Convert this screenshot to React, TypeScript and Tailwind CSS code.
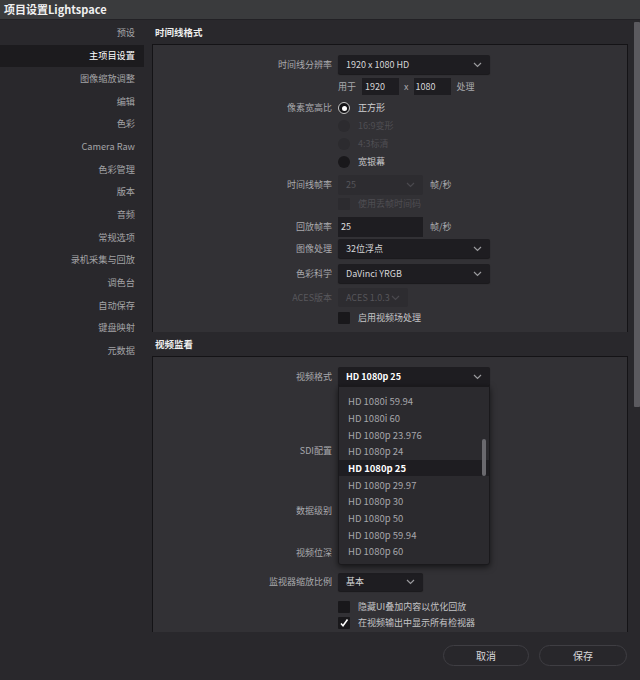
import React from 'react';

const font = { fontFamily: '"Noto Sans CJK SC", "Noto Sans", sans-serif' };

const navItems = [
  '预设', '主项目设置', '图像缩放调整', '编辑', '色彩', 'Camera Raw', '色彩管理', '版本',
  '音频', '常规选项', '录机采集与回放', '调色台', '自动保存', '键盘映射', '元数据',
];

const formats = [
  'HD 1080i 59.94', 'HD 1080i 60', 'HD 1080p 23.976', 'HD 1080p 24', 'HD 1080p 25',
  'HD 1080p 29.97', 'HD 1080p 30', 'HD 1080p 50', 'HD 1080p 59.94', 'HD 1080p 60',
];

function Chevron({ dim }: { dim?: boolean }) {
  return (
    <svg width="9" height="6" viewBox="0 0 9 6" className={dim ? 'text-[#4a494e]' : 'text-[#9a9a9e]'}>
      <path d="M1 1l3.5 3.5L8 1" fill="none" stroke="currentColor" strokeWidth="1.2" />
    </svg>
  );
}

function Select({ value, w, dim, bold }: { value: string; w: string; dim?: boolean; bold?: boolean }) {
  return (
    <div
      className={`${w} h-full flex items-center justify-between pl-2 pr-2 rounded-[2px] whitespace-nowrap ${
        dim ? 'bg-[#2d2c30] text-[#56555a]' : 'bg-[#1e1d21] text-[#d6d6d8] shadow-[0_1px_1px_rgba(0,0,0,0.5)]'
      } ${bold ? 'font-bold text-white' : ''}`}
    >
      <span>{value}</span>
      <Chevron dim={dim} />
    </div>
  );
}

function Row({ label, dim, cls, children }: { label?: string; dim?: boolean; cls: string; children?: React.ReactNode }) {
  return (
    <div className={`flex items-center ${cls}`}>
      <div className={`w-[185px] text-right pr-[6px] whitespace-nowrap ${dim ? 'text-[#58575c]' : 'text-[#a9a9ad]'}`}>{label}</div>
      <div className="flex items-center h-full gap-[6px]">{children}</div>
    </div>
  );
}

function Radio({ on, dark }: { on?: boolean; dark?: boolean }) {
  return (
    <div
      className={`w-[12px] h-[12px] rounded-full flex items-center justify-center ${
        on ? 'bg-[#151417] border border-[#c8c8c8]' : dark ? 'bg-[#19181b]' : 'bg-[#2c2b2f]'
      }`}
    >
      {on && <div className="w-[5px] h-[5px] rounded-full bg-white" />}
    </div>
  );
}

function Check({ on, dim }: { on?: boolean; dim?: boolean }) {
  return (
    <div className={`w-[12px] h-[12px] rounded-[1px] flex items-center justify-center ${dim ? 'bg-[#2c2b2f]' : 'bg-[#19181b]'}`}>
      {on && (
        <svg width="10" height="10" viewBox="0 0 10 10">
          <path d="M2 5.5l2 2.2L8.5 1.5" fill="none" stroke="white" strokeWidth="1.6" />
        </svg>
      )}
    </div>
  );
}

export default function App() {
  return (
    <div style={font} className="w-[640px] h-[680px] bg-[#29282c] flex flex-col text-[9px] overflow-hidden">
      {/* title bar */}
      <div className="h-[20px] bg-[#3a3b3d] border-b border-[#222125] flex items-center px-[4px] text-[11px] font-bold text-[#f0f0f0]">
        项目设置Lightspace
      </div>

      <div className="flex h-[612px]">
        {/* sidebar */}
        <div className="w-[148px] pt-[2px] flex flex-col text-[9.2px]">
          {navItems.map((n) => (
            <div
              key={n}
              className={`h-[22.7px] flex items-center justify-end pr-[9px] w-[144px] ${
                n === '主项目设置' ? 'bg-[#1c1b1e] text-white' : 'text-[#a3a3a6]'
              }`}
            >
              {n}
            </div>
          ))}
        </div>

        {/* main */}
        <div className="flex-1 relative overflow-hidden pl-[4px]">
          <div className="h-[24px] flex items-center pl-[3px] font-bold text-[#eeeeee] text-[9.5px]">时间线格式</div>
          <div className="w-[476px] h-[288px] bg-[#323135] border-t border-l border-r border-[#141316] pt-[10px]">
            <Row label="时间线分辨率" cls="h-[19px]">
              <Select value="1920 x 1080 HD" w="w-[152px]" />
            </Row>
            <Row cls="h-[17px] mt-[4px]">
              <span className="text-[#a9a9ad]">用于</span>
              <div className="w-[37px] h-full bg-[#1e1d21] text-[#d6d6d8] flex items-center pl-[3px]">1920</div>
              <span className="text-[#a9a9ad] -mx-[1px]">x</span>
              <div className="w-[37px] h-full bg-[#1e1d21] text-[#d6d6d8] flex items-center pl-[2px]">1080</div>
              <span className="text-[#a9a9ad]">处理</span>
            </Row>
            <Row label="像素宽高比" cls="h-[14px] mt-[6px]">
              <Radio on />
              <span className="text-[#d0d0d2] ml-[2px]">正方形</span>
            </Row>
            <Row cls="h-[14px] mt-[4px]">
              <Radio />
              <span className="text-[#4f4e53] ml-[2px]">16:9变形</span>
            </Row>
            <Row cls="h-[14px] mt-[4px]">
              <Radio />
              <span className="text-[#4f4e53] ml-[2px]">4:3标清</span>
            </Row>
            <Row cls="h-[14px] mt-[4px]">
              <Radio dark />
              <span className="text-[#c4c4c6] ml-[2px]">宽银幕</span>
            </Row>
            <Row label="时间线帧率" cls="h-[20px] mt-[6px]">
              <Select value="25" w="w-[85px]" dim />
              <span className="text-[#a9a9ad] ml-[1px]">帧/秒</span>
            </Row>
            <Row cls="h-[14px] mt-[2px]">
              <Check dim />
              <span className="text-[#4f4e53] ml-[2px]">使用丢帧时间码</span>
            </Row>
            <Row label="回放帧率" cls="h-[20px] mt-[6px]">
              <div className="w-[85px] h-full bg-[#1e1d21] text-[#e0e0e2] flex items-center pl-[3px]">25</div>
              <span className="text-[#a9a9ad] ml-[1px]">帧/秒</span>
            </Row>
            <Row label="图像处理" cls="h-[19px] mt-[2px]">
              <Select value="32位浮点" w="w-[152px]" />
            </Row>
            <Row label="色彩科学" cls="h-[19px] mt-[6px]">
              <Select value="DaVinci YRGB" w="w-[152px]" />
            </Row>
            <Row label="ACES版本" dim cls="h-[19px] mt-[5px]">
              <Select value="ACES 1.0.3" w="w-[70px]" dim />
            </Row>
            <Row cls="h-[14px] mt-[4px]">
              <Check />
              <span className="text-[#c4c4c6] ml-[2px]">启用视频场处理</span>
            </Row>
          </div>

          <div className="h-[24px] flex items-center pl-[3px] font-bold text-[#eeeeee] text-[9.5px]">视频监看</div>
          <div className="w-[476px] h-[300px] bg-[#323135] border-t border-l border-r border-[#141316] pt-[10px]">
            <Row label="视频格式" cls="h-[19px]">
              <Select value="HD 1080p 25" w="w-[152px]" bold />
            </Row>
            <Row label="SDI配置" cls="h-[14px] mt-[58px]" />
            <Row label="数据级别" cls="h-[14px] mt-[46px]" />
            <Row label="视频位深" cls="h-[14px] mt-[28px]" />
            <Row label="监视器缩放比例" cls="h-[18px] mt-[13px]">
              <Select value="基本" w="w-[85px]" />
            </Row>
            <Row cls="h-[14px] mt-[9px]">
              <Check />
              <span className="text-[#c4c4c6] ml-[2px]">隐藏UI叠加内容以优化回放</span>
            </Row>
            <Row cls="h-[14px] mt-[2px]">
              <Check on />
              <span className="text-[#c4c4c6] ml-[2px]">在视频输出中显示所有检视器</span>
            </Row>
          </div>

          {/* open format list */}
          <div className="absolute left-[190px] top-[366px] w-[152px] h-[179px] bg-[#2b2a2e] border border-[#1a191c] rounded-b-[3px] shadow-[0_2px_6px_rgba(0,0,0,0.6)] pt-[6px] text-[9.5px]">
            {formats.map((f) => (
              <div
                key={f}
                className={`h-[16.7px] flex items-center pl-[9px] ${
                  f === 'HD 1080p 25' ? 'bg-[#1e1d21] text-white font-bold' : 'text-[#a6a6aa]'
                }`}
              >
                {f}
              </div>
            ))}
            <div className="absolute left-[143px] top-[52px] w-[4px] h-[37px] rounded-full bg-[#6a696e]" />
          </div>
        </div>

        {/* scrollbar */}
        <div className="w-[8px] bg-[#29282c] pt-[2px] pl-[2px]">
          <div className="w-[6px] h-[385px] bg-[#5b5a5f] rounded-[1px]" />
        </div>
      </div>

      {/* footer */}
      <div className="flex-1 bg-[#29282c] flex items-center justify-end gap-[10px] pr-[13px] pb-[2px]">
        <button className="w-[86px] h-[21px] rounded-full border border-[#3f3e43] bg-[#28272b] text-[#d8d8da] text-[10px]">取消</button>
        <button className="w-[88px] h-[21px] rounded-full border border-[#3f3e43] bg-[#28272b] text-[#d8d8da] text-[10px]">保存</button>
      </div>
    </div>
  );
}
